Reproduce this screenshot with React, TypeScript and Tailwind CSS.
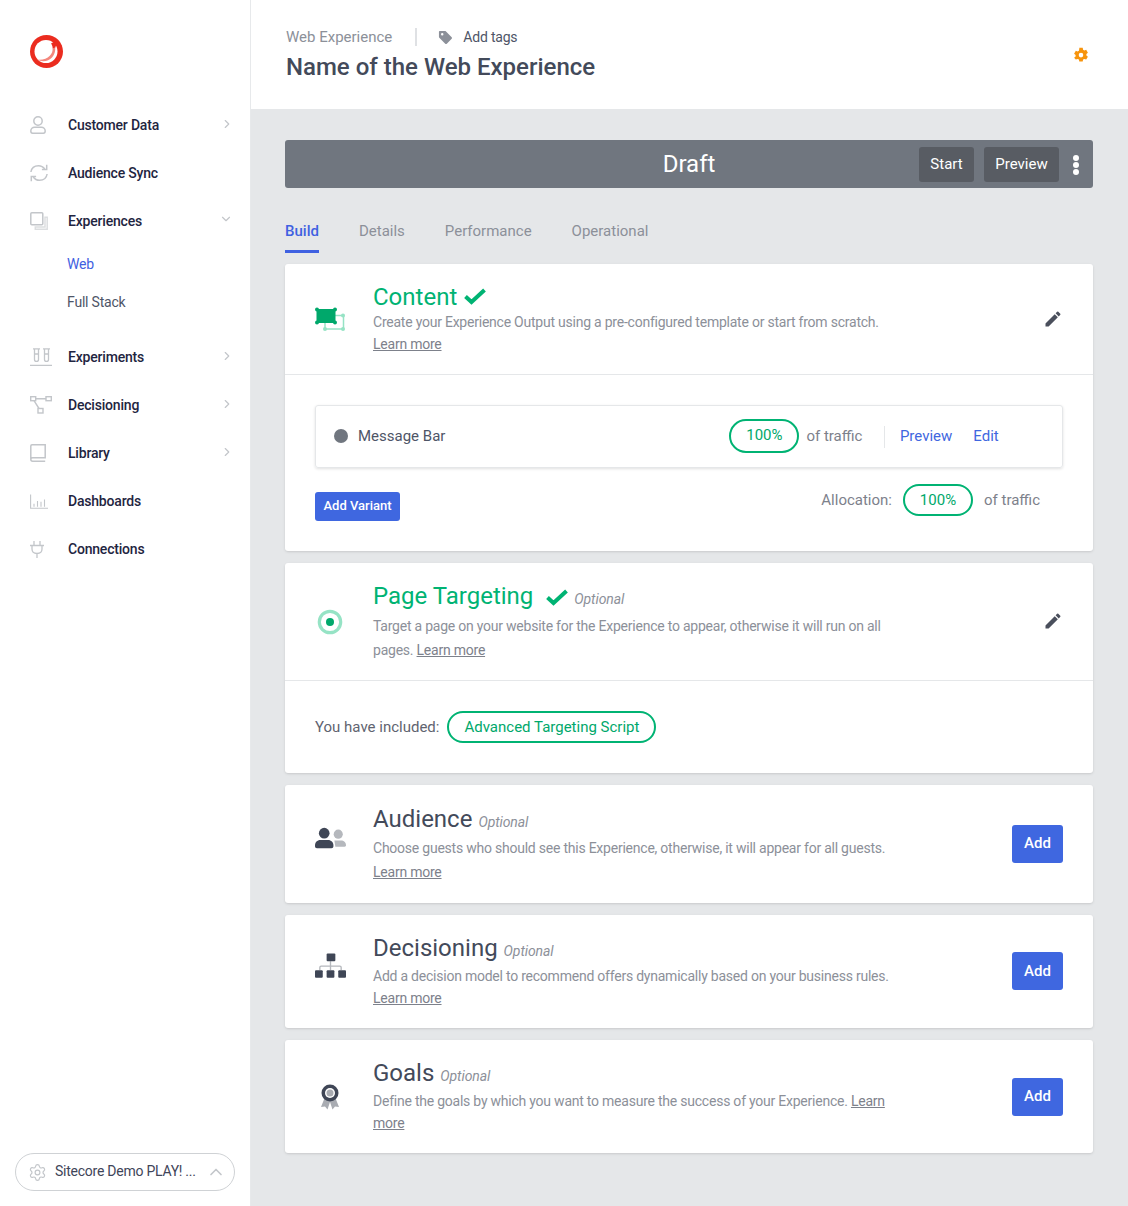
import { ChevronDown, ChevronRight, ChevronUp, Settings } from "lucide-react";
import type { ReactNode } from "react";

function UserIcon() {
  return (
    <svg viewBox="0 0 16 18" className="h-[18px] w-4 text-[#c3c6ca]" fill="none" stroke="currentColor" strokeWidth="1.500">
      <circle cx="8" cy="5" r="4.200" />
      <path d="M.8 15c0-2.300 1.800-3.800 3.800-3.800h6.800c2 0 3.800 1.500 3.800 3.800 0 1.400-.6 2.200-1.800 2.200H2.600C1.400 17.200.8 16.400.8 15z" />
    </svg>
  );
}

function SyncIcon() {
  return (
    <svg viewBox="0 0 18 18" className="h-[18px] w-[18px] text-[#c3c6ca]" fill="none" stroke="currentColor" strokeWidth="1.500">
      <path d="M.9 8C1.500 4 4.600 1.700 8.500 1.700c2.600 0 4.800 1.200 6.200 3.300" />
      <path d="M16.700.8v4.800h-4.800" />
      <path d="M17.100 10c-.6 4-3.700 6.300-7.600 6.300-2.600 0-4.800-1.200-6.200-3.300" />
      <path d="M1.300 17.200v-4.800h4.800" />
    </svg>
  );
}

function LayersIcon() {
  return (
    <svg viewBox="0 0 18 18" className="h-[18px] w-[18px]" fill="none" strokeWidth="1.500">
      <rect x="0.800" y="0.800" width="12" height="12" rx="1" stroke="#c3c6ca" />
      <path d="M15 5.300h2.200v11.900H5.300V15h9.700z" stroke="#dcdee0" />
    </svg>
  );
}

function FlasksIcon() {
  return (
    <svg viewBox="0 0 22 18" className="h-[18px] w-[22px] text-[#c3c6ca]" fill="none" stroke="currentColor" strokeWidth="1.300">
      <path d="M3 .8h7M13 .8h7M4.500 .8v10.700c0 2.600 4 2.600 4 0V.8M14.500 .8v10.700c0 2.600 4 2.600 4 0V.8M4.500 6h4M14.500 6h4M0 17.300h22" />
    </svg>
  );
}

function FlowIcon() {
  return (
    <svg viewBox="0 0 22 18" className="h-[18px] w-[22px] text-[#c3c6ca]" fill="none" stroke="currentColor" strokeWidth="1.400">
      <rect x="0.700" y="0.700" width="5" height="4" />
      <rect x="16" y="0.700" width="5.300" height="4" />
      <rect x="8" y="12.500" width="5" height="4.500" />
      <path d="M5.700 2.700H16M4 4.700l5 7.800" />
    </svg>
  );
}

function BookIcon() {
  return (
    <svg viewBox="0 0 16 18" className="h-[18px] w-[16px] text-[#c3c6ca]" fill="none" stroke="currentColor" strokeWidth="1.500">
      <path d="M.8 15V2C.8 1.300 1.300.8 2 .8h13.200v13H2.600C1.500 13.800.8 14.400.8 15.300c0 1 .7 1.900 1.800 1.900h12.600" />
    </svg>
  );
}

function ChartIcon() {
  return (
    <svg viewBox="0 0 18 18" className="h-[18px] w-[18px] text-[#c3c6ca]" fill="none" stroke="currentColor" strokeWidth="1.100">
      <path d="M.6 2.500v13.700H18M4 14.800v-3M7.500 14.800V9M11 14.800v-5M14.500 14.800V7.500" />
    </svg>
  );
}

function PlugIcon() {
  return (
    <svg viewBox="0 0 14 18" className="h-[18px] w-[14px] text-[#c3c6ca]" fill="none" stroke="currentColor" strokeWidth="1.300">
      <path d="M4 1v4M10 1v4M0 5.500h14M2 5.500v3.500c0 2.800 2 4.500 5 4.500s5-1.700 5-4.500V5.500M7 13.500V18" />
    </svg>
  );
}

function Logo() {
  return (
    <svg viewBox="0 0 33 33" className="h-[33px] w-[33px]">
      <circle cx="16.500" cy="16.500" r="16.500" fill="#eb2c1f" />
      <circle cx="16" cy="16.500" r="11.500" fill="#ffffff" />
      <path d="M7 24.500c5.500 3 11.500 1.800 15-2 2.500-2.800 3.600-6.500 3.200-10.500l-2.600 .8c.3 3.200-.6 5.800-2.800 8-3 3-7.600 4.500-12.800 3.700z" fill="#f4877d" />
      <path d="M21 8.500l3.200-1.700 2.100 3-1 2.600-2.600.8c0-1.800-.7-3.300-1.700-4.700z" fill="#eb2c1f" />
    </svg>
  );
}

function NavItem({ icon, label, chevron }: { icon: ReactNode; label: string; chevron?: "right" | "down" }) {
  return (
    <div className="relative flex h-12 items-center pl-[30px] pr-[16px]">
      <div className="flex w-[38px] shrink-0 items-center">{icon}</div>
      <span className="flex-1 text-[14px] font-medium tracking-[-0.2px] text-[#1f2541]">{label}</span>
      {chevron === "right" && <ChevronRight className="-mt-0.5 h-[14px] w-[14px] text-[#c3c6ca]" />}
      {chevron === "down" && <ChevronDown className="-mt-1 mr-[1px] h-[14px] w-[14px] text-[#c3c6ca]" />}
    </div>
  );
}

function Sidebar() {
  return (
    <aside className="flex w-[251px] shrink-0 flex-col border-r border-[#e7e9eb] bg-white">
      <div className="pl-[30px] pt-[35px]">
        <Logo />
      </div>
      <nav className="mt-[33px]">
        <NavItem icon={<UserIcon />} label="Customer Data" chevron="right" />
        <NavItem icon={<SyncIcon />} label="Audience Sync" />
        <NavItem icon={<LayersIcon />} label="Experiences" chevron="down" />
        <div className="pb-[12px] pl-[67px] text-[14px] tracking-[-0.2px]">
          <div className="flex h-[38px] items-center pt-[1px] text-[#3f61e1]">Web</div>
          <div className="flex h-[38px] items-center text-[#4e5567]">Full Stack</div>
        </div>
        <NavItem icon={<FlasksIcon />} label="Experiments" chevron="right" />
        <NavItem icon={<FlowIcon />} label="Decisioning" chevron="right" />
        <NavItem icon={<BookIcon />} label="Library" chevron="right" />
        <NavItem icon={<ChartIcon />} label="Dashboards" />
        <NavItem icon={<PlugIcon />} label="Connections" />
      </nav>
      <div className="mt-auto px-[15px] pb-[15px]">
        <div className="flex h-[38px] items-center rounded-full border border-[#cfd2d5] pl-[12px] pr-[8px]">
          <Settings className="mr-[8px] h-[19px] w-[19px] text-[#c3c6ca]" strokeWidth={1.500} />
          <span className="flex-1 whitespace-nowrap pb-[2px] text-[14px] tracking-[-0.25px] text-[#3f4559]">Sitecore Demo PLAY! ...</span>
          <ChevronUp className="h-5 w-5 text-[#c3c6ca]" />
        </div>
      </div>
    </aside>
  );
}

function TagIcon() {
  return (
    <svg viewBox="0 0 16 16" className="h-[15px] w-[15px] text-[#8c9099]" fill="currentColor">
      <path d="M1 1.800C1 1.300 1.300 1 1.800 1h5.500c.4 0 .7.100 1 .4l6.300 6.300c.5.500.5 1.200 0 1.700l-5.200 5.200c-.5.500-1.200.500-1.700 0L1.400 8.300c-.3-.3-.4-.6-.4-1V1.800zM4.500 3.200a1.300 1.300 0 1 0 0 2.600 1.300 1.300 0 0 0 0-2.600z" />
    </svg>
  );
}

function GearSolid() {
  return (
    <svg viewBox="0 0 16 16" className="h-4 w-4 text-[#f7940d]" fill="currentColor" fillRule="evenodd">
      <path d="M6.300 .8h3.400l.4 2 1.200.7 1.900-.7 1.700 2.900-1.500 1.300v1.400l1.500 1.300-1.700 2.900-1.900-.7-1.200.7-.4 2H6.300l-.4-2-1.200-.7-1.900.7L1.100 10.700l1.500-1.300V8L1.100 6.700l1.700-2.900 1.900.7 1.200-.7.4-2zM8 5.800a2.300 2.300 0 1 0 0 4.600 2.300 2.300 0 0 0 0-4.600z" />
    </svg>
  );
}

function Check({ className }: { className: string }) {
  return (
    <svg viewBox="0 0 22 17" className={className} fill="none" stroke="#00b373" strokeWidth="4">
      <path d="M1.500 8.500l6 5.500L20.500 2" />
    </svg>
  );
}

function ContentIcon() {
  return (
    <svg viewBox="0 0 30 24" className="h-6 w-[30px]">
      <path d="M10 8.500h18.500v13.500H10z" fill="none" stroke="#96e3c5" strokeWidth="1.500" />
      <g fill="#96e3c5">
        <circle cx="28" cy="8.500" r="2" />
        <circle cx="28" cy="22" r="2" />
        <circle cx="10" cy="22" r="2" />
      </g>
      <rect x="1.500" y="2" width="19" height="14" fill="#00a86b" />
      <g fill="#00a86b">
        <circle cx="2" cy="2.500" r="2" />
        <circle cx="20" cy="2.500" r="2" />
        <circle cx="2" cy="15.500" r="2" />
        <circle cx="20" cy="15.500" r="2" />
      </g>
    </svg>
  );
}

function TargetIcon() {
  return (
    <svg viewBox="0 0 26 26" className="h-[26px] w-[26px]">
      <circle cx="13" cy="13" r="10.700" fill="none" stroke="#96e3c5" strokeWidth="3.200" />
      <circle cx="13" cy="13" r="4" fill="#00a86b" />
    </svg>
  );
}

function AudienceIcon() {
  return (
    <svg viewBox="0 0 32 24" className="h-6 w-[31px]">
      <circle cx="24" cy="7" r="4.700" fill="#b5b8bd" />
      <path d="M20 13.500h7c2.600 0 5 2 5 5 0 1-.6 1.500-1.500 1.500H21z" fill="#b5b8bd" />
      <circle cx="9.500" cy="6" r="5.500" fill="#3f4656" />
      <path d="M5.500 13h8c3.200 0 5.500 2.500 5.500 5.500v1c0 1.200-.8 2-2 2H2c-1.200 0-2-.8-2-2v-1C0 15.500 2.300 13 5.500 13z" fill="#3f4656" />
    </svg>
  );
}

function TreeIcon() {
  return (
    <svg viewBox="0 0 32 26" className="h-[26px] w-[31px]">
      <path d="M16 8v5M5 17v-2.500c0-.8.500-1.300 1.300-1.300h19.400c.8 0 1.300.5 1.300 1.300V17M16 13v4" fill="none" stroke="#b5b8bd" strokeWidth="1.400" />
      <rect x="12" y="0" width="9" height="8" rx="1" fill="#3f4656" />
      <rect x="0" y="17.500" width="8" height="7.500" rx="1" fill="#3f4656" />
      <rect x="12" y="17.500" width="8" height="7.500" rx="1" fill="#3f4656" />
      <rect x="24" y="17.500" width="8" height="7.500" rx="1" fill="#3f4656" />
    </svg>
  );
}

function AwardIcon() {
  return (
    <svg viewBox="0 0 20 26" className="h-[26px] w-5">
      <path d="M5 13L1 23l4-.5 2.500 3L10 18l2.500 7.500 2.500-3 4 .5-4-10z" fill="#a9acb2" />
      <circle cx="10" cy="9" r="8.500" fill="#3f4656" />
      <circle cx="10" cy="9" r="5" fill="#ffffff" />
      <circle cx="10" cy="9" r="3.500" fill="#a9acb2" />
    </svg>
  );
}

function LearnMore({ children = "Learn more" }: { children?: ReactNode }) {
  return <a className="text-[#7d818b] underline">{children}</a>;
}

function Optional({ className = "" }: { className?: string }) {
  return <span className={`text-[14px] italic tracking-[-0.1px] text-[#8c9099] ${className}`}>Optional</span>;
}

function EditPencil() {
  return (
    <svg viewBox="0 0 24 24" className="h-5 w-5 text-[#4a4f5c]" fill="currentColor">
      <path d="M3 17.250V21h3.750L17.810 9.940l-3.750-3.750L3 17.250zM20.710 7.040a1 1 0 0 0 0-1.410l-2.340-2.340a1 1 0 0 0-1.410 0l-1.830 1.830 3.750 3.750 1.830-1.830z" />
    </svg>
  );
}

function AddButton({ className }: { className: string }) {
  return (
    <button className={`flex h-[38px] w-[51px] items-center justify-center rounded-[3px] bg-[#3f67e0] text-[15px] font-medium text-white ${className}`}>
      Add
    </button>
  );
}

function Pill({ children, className }: { children: ReactNode; className: string }) {
  return (
    <span className={`flex items-center justify-center rounded-full border-2 border-[#00b373] text-[15px] text-[#00a86b] ${className}`}>
      {children}
    </span>
  );
}

function SimpleCard({
  icon,
  title,
  children,
  height,
  iconClass,
  pClass,
  addClass,
  buttonClass,
}: {
  icon: ReactNode;
  title: string;
  children: ReactNode;
  height: string;
  iconClass: string;
  pClass: string;
  addClass?: string;
  buttonClass: string;
}) {
  return (
    <section className={`flex items-center rounded-[3px] bg-white pl-[30px] pr-[30px] shadow-sm ${height}`}>
      <div className={`flex w-[58px] shrink-0 ${iconClass}`}>{icon}</div>
      <div className="w-[530px]">
        <div className="flex items-baseline gap-[6px]">
          <h2 className="text-[24px] leading-[28px] text-[#434a5a]">{title}</h2>
          <Optional />
        </div>
        <p className={`text-[14px] tracking-[-0.23px] text-[#8c9099] ${pClass}`}>{children}</p>
      </div>
      <div className={`ml-auto ${addClass ?? ""}`}>
        <AddButton className={buttonClass} />
      </div>
    </section>
  );
}

export default function App() {
  return (
    <div className="flex min-h-[1206px] bg-[#e5e7e9] font-['Roboto',sans-serif]">
      <Sidebar />
      <div className="flex min-w-0 flex-1 flex-col">
        <header className="flex h-[109px] items-start justify-between bg-white pl-[35px] pr-[39px]">
          <div className="pt-[28px]">
            <div className="flex h-[18px] items-center text-[14px]">
              <span className="text-[15px] text-[#8c9099]">Web Experience</span>
              <span className="ml-[23px] h-[18px] w-[2px] bg-[#dfe1e4]" />
              <span className="ml-[21px]"><TagIcon /></span>
              <span className="ml-[10px] tracking-[-0.2px] text-[#4e5567]">Add tags</span>
            </div>
            <h1 className="mt-[5px] text-[24px] font-medium leading-[32px] text-[#434a5a]">Name of the Web Experience</h1>
          </div>
          <div className="pt-[47px]"><GearSolid /></div>
        </header>

        <main className="flex flex-col px-[34px] pr-[35px] pt-[31px]">
          <div className="relative flex h-12 items-center justify-center rounded-[3px] bg-[#70767f]">
            <span className="text-[24px] text-white">Draft</span>
            <div className="absolute right-[14px] top-[7px] flex items-center">
              <button className="flex h-[35px] w-[55px] items-center justify-center rounded-[3px] bg-[#585c63] text-[15px] text-white">Start</button>
              <button className="ml-[10px] flex h-[35px] w-[75px] items-center justify-center rounded-[3px] bg-[#585c63] text-[15px] text-white">Preview</button>
              <span className="ml-[14px] flex flex-col gap-[1px]">
                <i className="h-[6px] w-[6px] rounded-full bg-white" />
                <i className="h-[6px] w-[6px] rounded-full bg-white" />
                <i className="h-[6px] w-[6px] rounded-full bg-white" />
              </span>
            </div>
          </div>

          <nav className="mt-[22px] flex h-[43px] gap-10 text-[15px] text-[#8c9099]">
            <span className="border-b-[3px] border-[#3f61e1] pt-[10px] font-medium text-[#3f61e1]">Build</span>
            <span className="pt-[10px]">Details</span>
            <span className="pt-[10px]">Performance</span>
            <span className="pt-[10px]">Operational</span>
          </nav>

          <div className="mt-[11px] flex flex-col gap-3">
            <section className="rounded-[3px] bg-white shadow-sm">
              <div className="flex h-[111px] items-center border-b border-[#e5e7e9] pl-[30px] pr-[30px]">
                <div className="w-[58px] shrink-0"><ContentIcon /></div>
                <div>
                  <div className="flex items-center gap-[7px]">
                    <h2 className="text-[24px] leading-[28px] text-[#00b373]">Content</h2>
                    <Check className="h-[17px] w-[22px]" />
                  </div>
                  <p className="mb-[1px] text-[14px] leading-[22px] tracking-[-0.23px] text-[#8c9099]">
                    Create your Experience Output using a pre-configured template or start from scratch.
                    <br />
                    <LearnMore />
                  </p>
                </div>
                <div className="ml-auto pb-[1px]"><EditPencil /></div>
              </div>
              <div className="h-[176px] px-[30px] pt-[30px]">
                <div className="flex h-[63px] items-center rounded-[3px] border border-[#e5e7e9] pl-[18px] shadow-[0_1px_3px_rgba(0,0,0,0.12)]">
                  <i className="-mt-[2px] h-[14px] w-[14px] rounded-full bg-[#70767f]" />
                  <span className="ml-[10px] text-[15px] text-[#4e5567]">Message Bar</span>
                  <Pill className="ml-[284px] -mt-[2px] h-[34px] w-[70px]">100%</Pill>
                  <span className="ml-[7px] text-[15px] text-[#7d818b]">of traffic</span>
                  <span className="ml-[22px] h-[22px] w-px bg-[#e5e7e9]" />
                  <span className="ml-[14.5px] text-[15px] text-[#3f67e0]">Preview</span>
                  <span className="ml-[21px] text-[15px] text-[#3f67e0]">Edit</span>
                </div>
                <div className="mt-4 flex items-start justify-between pr-[23px]">
                  <button className="mt-[8px] h-[29px] w-[85px] rounded-[3px] bg-[#3f67e0] pb-[2px] text-[13px] font-medium text-white">Add Variant</button>
                  <div className="flex items-center text-[15px] text-[#7d818b]">
                    <span>Allocation:</span>
                    <Pill className="ml-[11px] h-[32px] w-[70px]">100%</Pill>
                    <span className="ml-[11px]">of traffic</span>
                  </div>
                </div>
              </div>
            </section>

            <section className="rounded-[3px] bg-white shadow-sm">
              <div className="flex h-[118px] items-center border-b border-[#e5e7e9] pl-[30px] pr-[30px]">
                <div className="w-[58px] shrink-0 pl-[2px]"><TargetIcon /></div>
                <div className="w-[530px] pt-[2px]">
                  <div className="flex items-center">
                    <h2 className="text-[24px] leading-[26px] text-[#00b373]">Page Targeting</h2>
                    <Check className="ml-[13px] mt-[2px] h-[17px] w-[22px]" />
                    <Optional className="ml-[6px] pt-[6px]" />
                  </div>
                  <p className="mb-[1px] mt-[4px] text-[14px] leading-[24px] tracking-[-0.23px] text-[#8c9099]">
                    Target a page on your website for the Experience to appear, otherwise it will run on all pages. <LearnMore />
                  </p>
                </div>
                <div className="ml-auto pb-[1px]"><EditPencil /></div>
              </div>
              <div className="flex h-[92px] items-center pl-[30px] text-[15px] text-[#5f6470]">
                You have included:
                <Pill className="ml-2 h-[32px] w-[209px]">Advanced Targeting Script</Pill>
              </div>
            </section>

            <SimpleCard icon={<AudienceIcon />} title="Audience" height="h-[118px]" iconClass="mb-[10px]" pClass="mt-[3px] leading-[24px]" buttonClass="pb-[2px]">
              Choose guests who should see this Experience, otherwise, it will appear for all guests.
              <br />
              <LearnMore />
            </SimpleCard>
            <SimpleCard icon={<TreeIcon />} title="Decisioning" height="h-[113px]" iconClass="mb-[12px]" pClass="mt-[3px] leading-[22px]" addClass="-mt-[2px]" buttonClass="pt-[1px]">
              Add a decision model to recommend offers dynamically based on your business rules.
              <br />
              <LearnMore />
            </SimpleCard>
            <SimpleCard icon={<div className="pl-[5px]"><AwardIcon /></div>} title="Goals" height="h-[113px]" iconClass="" pClass="mt-[3px] leading-[22px]" buttonClass="">
              Define the goals by which you want to measure the success of your Experience. <LearnMore />
            </SimpleCard>
          </div>
        </main>
      </div>
    </div>
  );
}
